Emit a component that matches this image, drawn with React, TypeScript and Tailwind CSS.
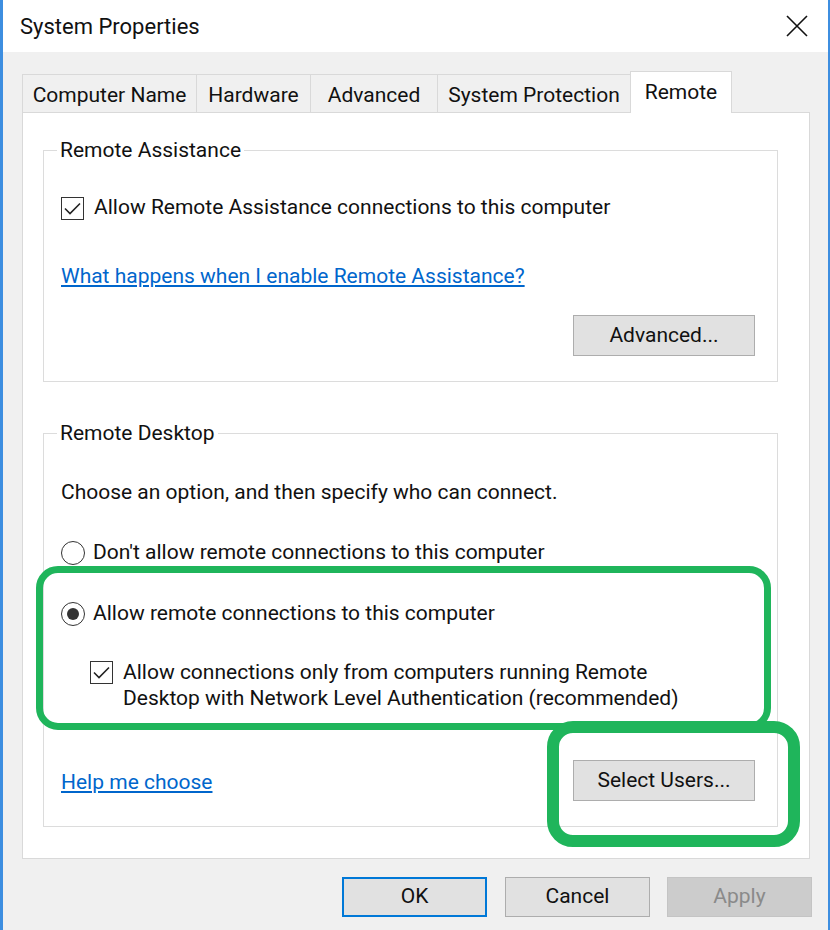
import React from "react";

const Check = () => (
  <span className="w-[23px] h-[23px] border border-[#333] bg-white flex items-center justify-center shrink-0">
    <svg width="17" height="13" viewBox="0 0 17 13" fill="none">
      <path d="M1 6.5 L6 11.5 L16 1.5" stroke="#222" strokeWidth="1.6" />
    </svg>
  </span>
);

const Radio = ({ on }: { on?: boolean }) => (
  <span className="w-[24px] h-[24px] rounded-full border-[1.5px] border-[#333] bg-white flex items-center justify-center shrink-0">
    {on && <span className="w-[12px] h-[12px] rounded-full bg-[#333]" />}
  </span>
);

const Btn = ({ children, className = "" }: { children: React.ReactNode; className?: string }) => (
  <button className={`h-[41px] w-[182px] bg-[#e1e1e1] border border-[#adadad] text-[21px] text-[#111] ${className}`}>
    {children}
  </button>
);

const tabs = [
  { label: "Computer Name", w: "w-[174px]" },
  { label: "Hardware", w: "w-[114px]" },
  { label: "Advanced", w: "w-[127px]" },
  { label: "System Protection", w: "w-[193px]" },
];

export default function App() {
  return (
    <div className="w-[830px] h-[930px] bg-[#f0f0f0] border-l-[3px] border-r-[2px] border-[#3d8ee0] flex flex-col font-[Roboto,sans-serif] text-[#111] overflow-hidden">
      {/* title bar */}
      <div className="h-[52px] bg-white flex items-center justify-between pl-[17px] pr-[20px] shrink-0">
        <span className="text-[22px] leading-none mt-[2px]">System Properties</span>
        <svg width="22" height="22" viewBox="0 0 22 22">
          <path d="M1 1 L21 21 M21 1 L1 21" stroke="#111" strokeWidth="1.6" />
        </svg>
      </div>

      {/* tabs */}
      <div className="flex items-end ml-[19px] mt-[19px] h-[41px] text-[21px]">
        {tabs.map((t) => (
          <div
            key={t.label}
            className={`${t.w} h-[38px] border border-r-0 border-b-0 border-[#d9d9d9] bg-[#f0f0f0] flex items-center justify-center pt-[5px]`}
          >
            {t.label}
          </div>
        ))}
        <div className="w-[102px] h-[42px] border border-b-0 border-[#d9d9d9] bg-white flex items-start justify-center pt-[5px] -mb-px relative z-10">
          Remote
        </div>
      </div>

      {/* panel */}
      <div className="ml-[19px] w-[788px] bg-white border border-[#d9d9d9] pt-[24px] pb-[31px] text-[21px]">
        <fieldset className="ml-[20px] w-[735px] min-w-0 border border-[#dcdcdc]">
          <legend className="ml-[13px] px-[3px] leading-[26px]">Remote Assistance</legend>
          <div className="pl-[17px] pr-[22px] pb-[25px] flex flex-col">
            <label className="mt-[32px] h-[26px] flex items-center gap-[10px]">
              <Check />
              <span>Allow Remote Assistance connections to this computer</span>
            </label>
            <a className="mt-[42px] h-[26px] leading-[26px] text-[#0066cc] underline self-start">
              What happens when I enable Remote Assistance?
            </a>
            <Btn className="mt-[26px] self-end">Advanced...</Btn>
          </div>
        </fieldset>

        <fieldset className="ml-[20px] mt-[38px] w-[735px] min-w-0 border border-[#dcdcdc]">
          <legend className="ml-[13px] px-[3px] leading-[26px]">Remote Desktop</legend>
          <div className="pl-[17px] pr-[22px] pb-[25px] flex flex-col">
            <p className="mt-[33px] h-[26px] leading-[26px]">
              Choose an option, and then specify who can connect.
            </p>
            <label className="mt-[35px] h-[26px] flex items-center gap-[8px]">
              <Radio />
              <span>Don't allow remote connections to this computer</span>
            </label>

            {/* highlight around the allow option */}
            <div className="-ml-[25px] w-[735px] shrink-0 border-[7px] border-[#1fb55b] rounded-[22px] pl-[18px] pt-[28px] pb-[12px]">
              <label className="h-[26px] flex items-center gap-[8px]">
                <Radio on />
                <span>Allow remote connections to this computer</span>
              </label>
              <div className="mt-[32px] ml-[29px] flex items-start gap-[10px]">
                <span className="mt-[2px]">
                  <Check />
                </span>
                <span className="leading-[26px]">
                  Allow connections only from computers running Remote
                  <br />
                  Desktop with Network Level Authentication (recommended)
                </span>
              </div>
            </div>

            <div className="mt-[30px] flex items-center justify-between">
              <a className="text-[#0066cc] underline leading-[26px] mt-[3px]">Help me choose</a>
              <div className="relative">
                <Btn className="h-[40px]">Select Users...</Btn>
                <span className="absolute -left-[26px] -right-[45px] -top-[39px] -bottom-[46px] border-[12px] border-[#1fb55b] rounded-[26px] pointer-events-none" />
              </div>
            </div>
          </div>
        </fieldset>
      </div>

      {/* dialog buttons */}
      <div className="mt-[18px] flex justify-end pr-[16px] text-[21px]">
        <button className="w-[145px] h-[40px] bg-[#e1e1e1] border-2 border-[#0078d7]">OK</button>
        <button className="ml-[18px] w-[145px] h-[40px] bg-[#e1e1e1] border border-[#adadad]">Cancel</button>
        <button className="ml-[17px] w-[145px] h-[40px] bg-[#cccccc] border border-[#c4c4c4] text-[#8a8a8a]">
          Apply
        </button>
      </div>
    </div>
  );
}
